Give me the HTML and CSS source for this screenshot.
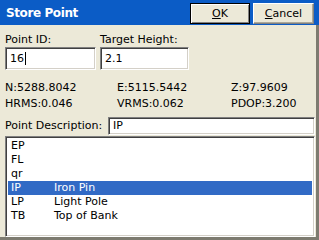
FILE: index.html
```html
<!DOCTYPE html>
<html>
<head>
<meta charset="utf-8">
<link rel="stylesheet" href="styles.css">
</head>
<body>
<div class="window">
  <div class="titlebar">
    <span class="title">Store Point</span>
    <div class="buttons">
      <button class="btn btn-default"><u>O</u>K</button>
      <button class="btn"><u>C</u>ancel</button>
    </div>
  </div>
  <div class="content">
    <div class="fields">
      <div class="field field-id">
        <label class="label">Point ID:</label>
        <div class="input input-tall"><span class="caret">16</span></div>
      </div>
      <div class="field field-height">
        <label class="label">Target Height:</label>
        <div class="input input-tall">2.1</div>
      </div>
    </div>
    <div class="readout">
      <span class="c1">N:5288.8042</span><span class="c2">E:5115.5442</span><span class="c3">Z:97.9609</span>
      <span class="c1">HRMS:0.046</span><span class="c2">VRMS:0.062</span><span class="c3">PDOP:3.200</span>
    </div>
    <div class="desc-row">
      <label class="label">Point Description:</label>
      <div class="input input-desc">IP</div>
    </div>
    <ul class="list">
      <li class="item"><span class="code">EP</span><span class="name"></span></li>
      <li class="item"><span class="code">FL</span><span class="name"></span></li>
      <li class="item"><span class="code">qr</span><span class="name"></span></li>
      <li class="item selected"><span class="code">IP</span><span class="name">Iron Pin</span></li>
      <li class="item"><span class="code">LP</span><span class="name">Light Pole</span></li>
      <li class="item"><span class="code">TB</span><span class="name">Top of Bank</span></li>
    </ul>
  </div>
</div>
</body>
</html>
```
FILE: styles.css
```css
* { box-sizing: border-box; }
html, body { margin: 0; padding: 0; }
body {
  width: 319px;
  height: 240px;
  overflow: hidden;
  font-family: "DejaVu Sans", Verdana, sans-serif;
  font-size: 10px;
  color: #000;
  background: #ece9d8;
}
.window {
  width: 319px;
  height: 240px;
  display: flex;
  flex-direction: column;
}
.titlebar {
  height: 25px;
  background: #0b5cc6;
  display: flex;
  align-items: flex-start;
  padding-left: 6px;
  flex-shrink: 0;
}
.title {
  color: #fff;
  font-weight: bold;
  font-size: 12px;
  letter-spacing: -0.4px;
  line-height: 14px;
  margin-top: 6px;
}
.buttons {
  margin-left: auto;
  display: flex;
  gap: 3px;
  margin-top: 3px;
  margin-right: 5px;
}
.btn {
  height: 21px;
  background: #ece9d8;
  font-family: "DejaVu Sans", Verdana, sans-serif;
  font-size: 11px;
  color: #000;
  padding: 0;
  border: 1px solid;
  border-color: #fff #808080 #808080 #fff;
  box-shadow: inset -1px -1px 0 #aca899;
  width: 61px;
}
.btn-default {
  width: 60px;
  border: 1px solid #000;
  box-shadow: inset 1px 1px 0 #fff, inset -1px -1px 0 #808080;
}
.content {
  flex: 1;
  display: flex;
  flex-direction: column;
  padding: 0 0 0 5px;
  border-right: 3px solid #7d7b70;
  border-bottom: 3px solid #7d7b70;
}
.fields {
  display: flex;
  gap: 4px;
  margin-top: 8px;
}
.field { display: flex; flex-direction: column; }
.field-id { width: 91px; }
.field-height { width: 89px; }
.label {
  line-height: 14px;
  font-size: 11px;
}
.input {
  background: #fff;
  border: 1px solid;
  border-color: #808080 #fff #fff #808080;
  box-shadow: inset 1px 1px 0 #404040, inset -1px -1px 0 #d4d0c8;
  font-size: 11px;
  padding-left: 4px;
}
.input-tall {
  height: 23px;
  line-height: 21px;
}
.caret {
  border-right: 1px solid #000;
  padding-right: 1px;
}
.readout {
  display: grid;
  grid-template-columns: 112px 114px auto;
  margin-top: 10px;
  font-size: 11px;
  line-height: 16px;
}
.desc-row {
  display: flex;
  align-items: center;
  margin-top: 5px;
  padding-right: 1px;
}
.desc-row .label { width: 103px; }
.input-desc {
  flex: 1;
  height: 18px;
  line-height: 16px;
}
.list {
  list-style: none;
  margin: 1px 1px 0 0;
  padding: 2px 2px;
  height: 101px;
  background: #fff;
  border: 1px solid;
  border-color: #808080 #fff #fff #808080;
  box-shadow: inset 1px 1px 0 #404040, inset -1px -1px 0 #d4d0c8;
  font-size: 11px;
}
.item {
  display: flex;
  height: 14px;
  line-height: 14px;
  padding-left: 3px;
}
.code { width: 43px; }
.selected {
  background: #316ac5;
  color: #fff;
}
```
